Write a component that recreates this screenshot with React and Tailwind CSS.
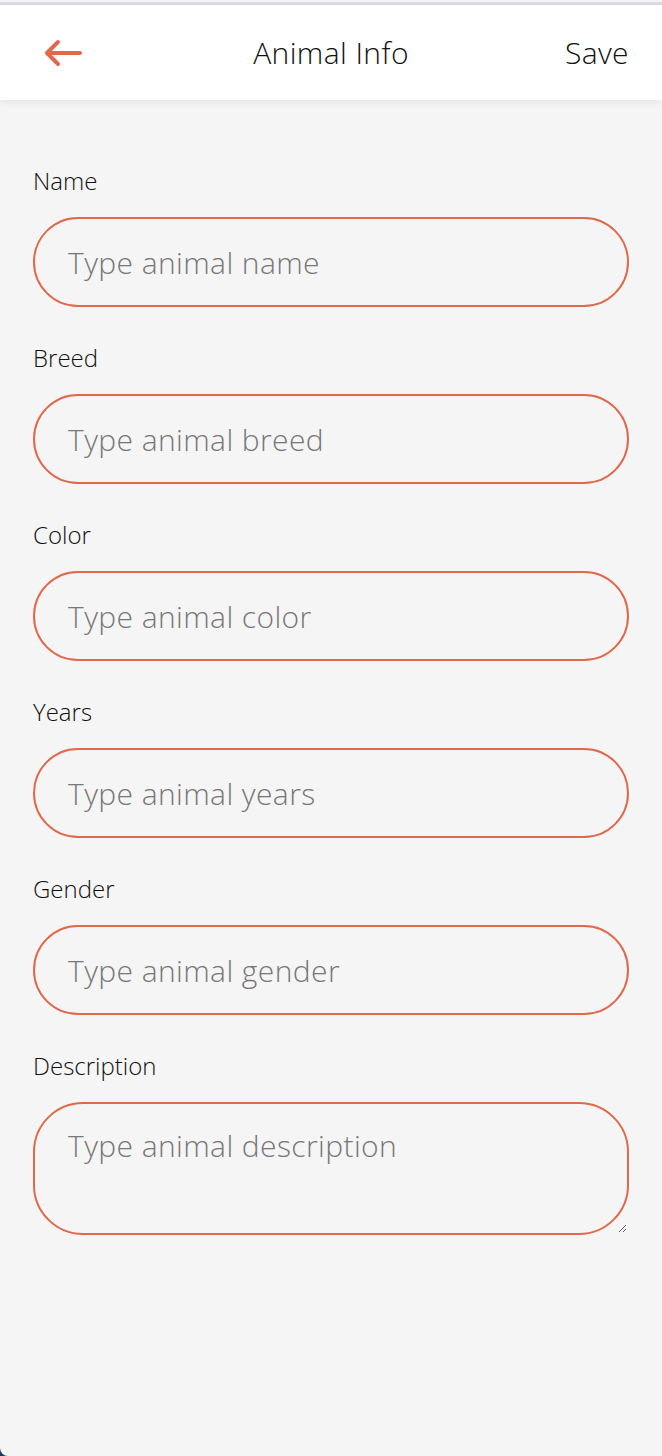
import { useState } from 'react';

const fields = [
    { key: 'name', label: 'Name', placeholder: 'Type animal name' },
    { key: 'breed', label: 'Breed', placeholder: 'Type animal breed' },
    { key: 'color', label: 'Color', placeholder: 'Type animal color' },
    { key: 'years', label: 'Years', placeholder: 'Type animal years' },
    { key: 'gender', label: 'Gender', placeholder: 'Type animal gender' },
];

export default function App() {
    const [form, setForm] = useState({ name: '', breed: '', color: '', years: '', gender: '', description: '' });

    return (
        <div className="bg-[#1d3768] min-h-[1456px]" style={{ fontFamily: '"Open Sans", Lato, sans-serif' }}>
            <div className="bg-[#f5f5f5] min-h-[1456px] rounded-bl-[8px] flex flex-col">
                <div className="h-[3px] mt-[2px] bg-[#dddde5]" />
                {/* header */}
                <div className="relative z-10 bg-white h-[95px] flex items-center justify-between px-[33px] shadow-[0_2px_8px_rgba(0,0,0,0.08)]">
                    <button className="w-[70px] h-[40px] flex items-center">
                        <svg width="40" height="30" viewBox="0 0 40 30" className="ml-[10px]">
                            <path d="M37 15 H4 M15 4 L4 15 L15 26" fill="none" stroke="#e0694b" strokeWidth="4" strokeLinecap="round" strokeLinejoin="round" />
                        </svg>
                    </button>
                    <h1 className="text-[30px] leading-[36px] text-[#111] font-light tracking-[0.4px]">Animal Info</h1>
                    <button className="text-[30px] leading-[36px] text-[#111] font-light tracking-[0.4px] w-[70px] text-right">Save</button>
                </div>

                <form className="px-[33px] pt-[67px]" onSubmit={(e) => e.preventDefault()}>
                    {fields.map((f) => (
                        <div key={f.key} className="mb-[37px]">
                            <label className="block text-[24px] leading-[28px] text-[#111] font-light mb-[22px]">{f.label}</label>
                            <input
                                type="text"
                                placeholder={f.placeholder}
                                value={form[f.key]}
                                onChange={(e) => setForm({ ...form, [f.key]: e.target.value })}
                                className="w-full h-[90px] rounded-full border-2 border-[#e0694b] bg-transparent px-[33px] text-[30px] tracking-[0.4px] font-light text-[#333] placeholder:text-[#777] outline-none"
                            />
                        </div>
                    ))}
                    <div>
                        <label className="block text-[24px] leading-[28px] text-[#111] font-light mb-[22px]">Description</label>
                        <textarea
                            placeholder="Type animal description"
                            value={form.description}
                            onChange={(e) => setForm({ ...form, description: e.target.value })}
                            className="block w-full h-[133px] rounded-[50px] border-2 border-[#e0694b] bg-transparent px-[33px] pt-[22px] text-[30px] leading-[40px] tracking-[0.4px] font-light text-[#333] placeholder:text-[#777] outline-none"
                        />
                    </div>
                </form>
            </div>
        </div>
    );
}
